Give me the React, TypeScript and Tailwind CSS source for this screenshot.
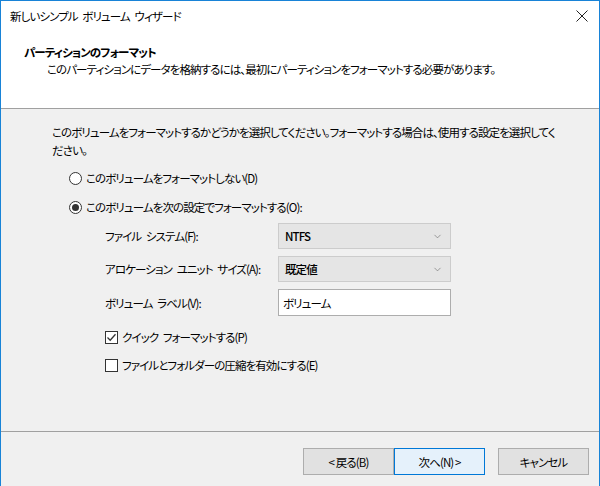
import { ChevronDown } from "lucide-react";

const font = "font-['Meiryo_UI','Noto_Sans_CJK_JP',sans-serif] [font-feature-settings:'palt']";

function Radio({ checked, label }: { checked?: boolean; label: string }) {
  return (
    <div className="flex items-center h-[16px]">
      <span className="w-[13px] h-[13px] rounded-full border border-[#333] bg-white flex items-center justify-center">
        {checked && <span className="w-[7px] h-[7px] rounded-full bg-[#333]" />}
      </span>
      <span className="ml-[4px]">{label}</span>
    </div>
  );
}

function Check({ checked, label }: { checked?: boolean; label: string }) {
  return (
    <div className="flex items-center h-[16px]">
      <span className="w-[13px] h-[13px] border border-[#333] bg-white flex items-center justify-center">
        {checked && (
          <svg width="11" height="11" viewBox="0 0 11 11">
            <path d="M1.5 5.5 L4.2 8.2 L9.5 2.2" fill="none" stroke="#333" strokeWidth="1.3" />
          </svg>
        )}
      </span>
      <span className="ml-[4px]">{label}</span>
    </div>
  );
}

function Combo({ value }: { value: string }) {
  return (
    <div className="w-[173px] h-[26px] border border-[#cccccc] bg-[#e5e5e5] flex items-center justify-between pl-[6px] pr-[7px]">
      <span className="font-medium">{value}</span>
      <ChevronDown size={11} strokeWidth={1.3} className="text-[#666]" />
    </div>
  );
}

function Button({ label, primary }: { label: string; primary?: boolean }) {
  return (
    <button
      className={
        primary
          ? "w-[91px] h-[27px] border border-[#0078d7] bg-[#e5f1fb]"
          : "w-[91px] h-[27px] border border-[#adadad] bg-[#e1e1e1]"
      }
    >
      {label}
    </button>
  );
}

export default function App() {
  return (
    <div className={`w-[600px] h-[486px] flex flex-col border-t border-l border-r border-[#1883d7] text-[11.5px] tracking-[-0.9px] [word-spacing:3px] leading-[16px] text-black ${font}`}>
      {/* title bar + header */}
      <div className="bg-white h-[108px] border-b border-[#a0a0a0] flex flex-col">
        <div className="h-[30px] flex items-center justify-between pl-[9px] pr-[11px]">
          <span>新しいシンプル ボリューム ウィザード</span>
          <svg width="12" height="12" viewBox="0 0 12 12">
            <path d="M0.5 0.5 L11.5 11.5 M11.5 0.5 L0.5 11.5" stroke="#222" strokeWidth="1" />
          </svg>
        </div>
        <div className="pl-[23px] mt-[13px] font-bold">パーティションのフォーマット</div>
        <div className="pl-[46px] mt-[1px]">
          このパーティションにデータを格納するには、最初にパーティションをフォーマットする必要があります。
        </div>
      </div>

      {/* body */}
      <div className="flex-1 bg-[#f0f0f0] flex flex-col pl-[51px] pt-[14px]">
        <p className="leading-[18px] whitespace-nowrap">
          このボリュームをフォーマットするかどうかを選択してください。フォーマットする場合は、使用する設定を選択してく
          <br />
          ださい。
        </p>
        <div className="ml-[17px] mt-[11px] flex flex-col gap-[13px]">
          <Radio label="このボリュームをフォーマットしない(D)" />
          <Radio checked label="このボリュームを次の設定でフォーマットする(O):" />
        </div>
        <div className="ml-[53px] mt-[8px] flex flex-col gap-[7px]">
          <div className="flex items-center">
            <span className="w-[173px] whitespace-nowrap">ファイル システム(F):</span>
            <Combo value="NTFS" />
          </div>
          <div className="flex items-center">
            <span className="w-[173px] whitespace-nowrap">アロケーション ユニット サイズ(A):</span>
            <Combo value="既定値" />
          </div>
          <div className="flex items-center">
            <span className="w-[173px] whitespace-nowrap">ボリューム ラベル(V):</span>
            <div className="w-[173px] h-[27px] border border-[#adadad] bg-white flex items-center pl-[4px]">
              ボリューム
            </div>
          </div>
        </div>
        <div className="ml-[53px] mt-[13px] flex flex-col gap-[12px]">
          <Check checked label="クイック フォーマットする(P)" />
          <Check label="ファイルとフォルダーの圧縮を有効にする(E)" />
        </div>
      </div>

      {/* footer */}
      <div className="h-[55px] bg-[#f0f0f0] border-t border-[#a0a0a0] flex items-start pt-[16px] pl-[302px]">
        <Button label="< 戻る(B)" />
        <Button primary label="次へ(N) >" />
        <div className="ml-[13px]">
          <Button label="キャンセル" />
        </div>
      </div>
    </div>
  );
}
